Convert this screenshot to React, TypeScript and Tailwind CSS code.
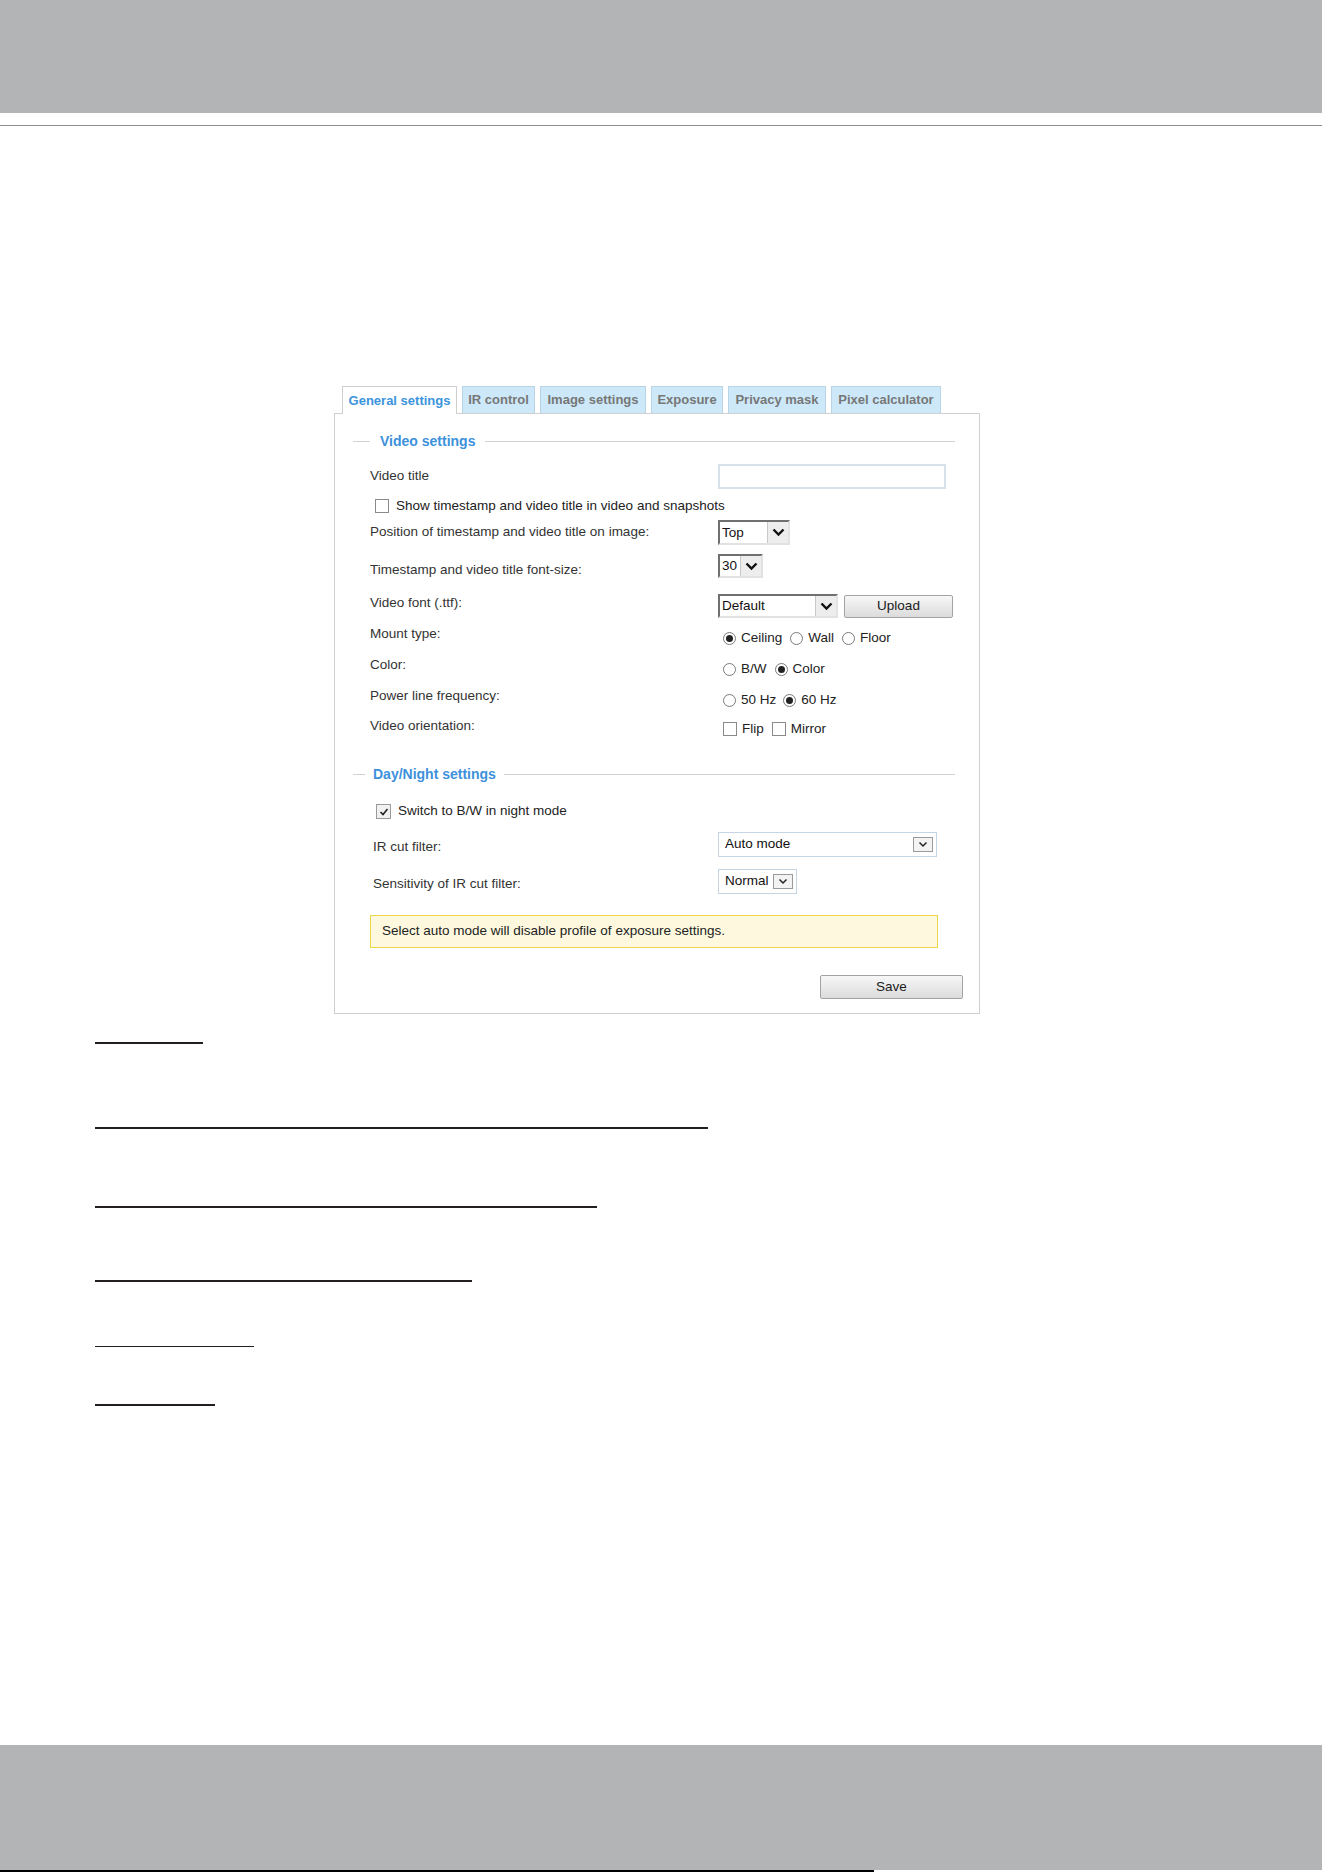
import React from "react";

const TABS = [
  { label: "General settings", w: "w-[115px]", active: true },
  { label: "IR control", w: "w-[73px]" },
  { label: "Image settings", w: "w-[106px]" },
  { label: "Exposure", w: "w-[72px]" },
  { label: "Privacy mask", w: "w-[98px]" },
  { label: "Pixel calculator", w: "w-[110px]" },
];

function Checkbox({ checked = false }: { checked?: boolean }) {
  return (
    <span className="w-[14px] h-[14px] shrink-0 border border-[#8a8a8a] bg-white flex items-center justify-center">
      {checked && (
        <svg width="10" height="10" viewBox="0 0 10 10">
          <polyline points="1.5,5 4,7.5 8.5,2" fill="none" stroke="#222" strokeWidth="1.6" />
        </svg>
      )}
    </span>
  );
}

function Radio({ checked = false }: { checked?: boolean }) {
  return (
    <span className="w-[13px] h-[13px] shrink-0 rounded-full border border-[#7a7a7a] bg-white flex items-center justify-center">
      {checked && <span className="w-[7px] h-[7px] rounded-full bg-[#222]" />}
    </span>
  );
}

function Chevron() {
  return (
    <svg width="13" height="9" viewBox="0 0 13 9">
      <polyline points="1.5,1.5 6.5,6.5 11.5,1.5" fill="none" stroke="#111" strokeWidth="2.4" />
    </svg>
  );
}

// old-style inset select with a grey drop button
function ClassicSelect({ value, w, h = "h-[24px]" }: { value: string; w: string; h?: string }) {
  return (
    <div className={`${w} ${h} flex border-2 border-t-[#707070] border-l-[#707070] border-r-[#e2e2e2] border-b-[#e2e2e2] bg-white`}>
      <span className="flex-1 flex items-center pl-[2px] pt-px text-[13.5px] text-[#111]">{value}</span>
      <span className="w-[21px] flex items-center justify-center bg-[#ededed] border-l border-[#c8c8c8]">
        <Chevron />
      </span>
    </div>
  );
}

// flat select with the small boxed arrow
function FlatSelect({ value, w }: { value: string; w: string }) {
  return (
    <div className={`${w} h-[25px] flex items-center border border-[#c6d5e4] bg-white pl-[6px] pr-[3px]`}>
      <span className="flex-1 text-[13.5px] text-[#111]">{value}</span>
      <span className="w-[20px] h-[15px] flex items-center justify-center border border-[#9a9a9a] bg-[#f3f3f3]">
        <svg width="10" height="7" viewBox="0 0 10 7">
          <polyline points="1.5,1.5 5,5 8.5,1.5" fill="none" stroke="#222" strokeWidth="1.5" />
        </svg>
      </span>
    </div>
  );
}

function Button({ label, w, h }: { label: string; w: string; h: string }) {
  return (
    <button className={`${w} ${h} border border-[#a3a3a3] rounded-[2px] bg-linear-to-b from-[#f7f7f7] to-[#dcdcdc] text-[13.5px] text-[#1a1a1a]`}>
      {label}
    </button>
  );
}

function Choice({ kind, label, checked }: { kind: "radio" | "check"; label: string; checked?: boolean }) {
  return (
    <span className="flex items-center gap-[5px]">
      {kind === "radio" ? <Radio checked={checked} /> : <Checkbox checked={checked} />}
      <span className="text-[13.5px] text-[#222]">{label}</span>
    </span>
  );
}

function Row({ label, h, labelPad = "", children }: { label: string; h: string; labelPad?: string; children: React.ReactNode }) {
  return (
    <div className={`flex items-center ${h}`}>
      <span className={`w-[348px] shrink-0 text-[13.5px] text-[#333] ${labelPad}`}>{label}</span>
      {children}
    </div>
  );
}

export default function App() {
  return (
    <div className="w-[1324px] h-[1872px] bg-white flex flex-col font-['Liberation_Sans',Arial,sans-serif]">
      <div className="w-[1322px] h-[113px] bg-[#b3b4b6]" />
      <div className="w-[1322px] h-px mt-[12px] bg-[#8e8e8e]" />

      {/* tab strip */}
      <div className="ml-[342px] mt-[260px] flex items-end gap-[5px] h-[27px]">
        {TABS.map((t) =>
          t.active ? (
            <div
              key={t.label}
              className={`${t.w} h-[28px] -mb-px relative z-10 bg-white border border-b-0 border-[#cfcfcf] flex items-center justify-center text-[13px] font-bold text-[#3b94dd]`}
            >
              {t.label}
            </div>
          ) : (
            <div
              key={t.label}
              className={`${t.w} h-[27px] bg-[#cde9f9] border border-b-0 border-[#b8d4e5] flex items-center justify-center text-[13px] font-bold text-[#777]`}
            >
              {t.label}
            </div>
          )
        )}
      </div>

      {/* settings panel */}
      <div className="ml-[334px] w-[646px] h-[601px] border border-[#cfcfcf] pt-[17px]">
        <div className="flex items-center h-[20px] pl-[18px] pr-[24px]">
          <span className="w-[17px] h-px bg-[#d2d2d2]" />
          <span className="ml-[10px] text-[14px] font-bold text-[#3d91db]">Video settings</span>
          <span className="ml-[10px] flex-1 h-px bg-[#d2d2d2]" />
        </div>

        <div className="pl-[35px]">
          <Row label="Video title" h="h-[25px] mt-[13px]">
            <div className="w-[228px] h-[25px] border-2 border-[#d6e1ec] bg-white" />
          </Row>
          <div className="flex items-center h-[14px] mt-[10px] pl-[5px] gap-[7px]">
            <Checkbox />
            <span className="text-[13.5px] text-[#222]">Show timestamp and video title in video and snapshots</span>
          </div>
          <Row label="Position of timestamp and video title on image:" h="h-[25px] mt-[7px]">
            <ClassicSelect value="Top" w="w-[72px]" h="h-[25px]" />
          </Row>
          <Row label="Timestamp and video title font-size:" h="h-[24px] mt-[9px]" labelPad="pt-[8px]">
            <ClassicSelect value="30" w="w-[45px]" />
          </Row>
          <Row label="Video font (.ttf):" h="h-[24px] mt-[16px]" labelPad="pb-[6px]">
            <div className="flex items-center gap-[6px]">
              <ClassicSelect value="Default" w="w-[120px]" />
              <Button label="Upload" w="w-[109px]" h="h-[23px]" />
            </div>
          </Row>
          <Row label="Mount type:" h="h-[20px] mt-[10px]" labelPad="pb-[8px]">
            <div className="flex items-center gap-[8px] pl-[5px]">
              <Choice kind="radio" label="Ceiling" checked />
              <Choice kind="radio" label="Wall" />
              <Choice kind="radio" label="Floor" />
            </div>
          </Row>
          <Row label="Color:" h="h-[20px] mt-[11px]" labelPad="pb-[8px]">
            <div className="flex items-center gap-[8px] pl-[5px]">
              <Choice kind="radio" label="B/W" />
              <Choice kind="radio" label="Color" checked />
            </div>
          </Row>
          <Row label="Power line frequency:" h="h-[20px] mt-[11px]" labelPad="pb-[8px]">
            <div className="flex items-center gap-[7px] pl-[5px]">
              <Choice kind="radio" label="50 Hz" />
              <Choice kind="radio" label="60 Hz" checked />
            </div>
          </Row>
          <Row label="Video orientation:" h="h-[20px] mt-[9px]" labelPad="pb-[6px]">
            <div className="flex items-center gap-[8px] pl-[5px]">
              <Choice kind="check" label="Flip" />
              <Choice kind="check" label="Mirror" />
            </div>
          </Row>
        </div>

        <div className="flex items-center h-[20px] mt-[25px] pl-[18px] pr-[24px]">
          <span className="w-[12px] h-px bg-[#d2d2d2]" />
          <span className="ml-[8px] text-[14px] font-bold text-[#3d91db]">Day/Night settings</span>
          <span className="ml-[8px] flex-1 h-px bg-[#d2d2d2]" />
        </div>

        <div className="pl-[38px]">
          <div className="flex items-center h-[15px] mt-[20px] pl-[3px] gap-[7px]">
            <span className="w-[15px] h-[15px] shrink-0 border border-[#9a9a9a] bg-[#f1f1f1] flex items-center justify-center">
              <svg width="10" height="10" viewBox="0 0 10 10">
                <polyline points="1.5,5 4,7.5 8.5,2" fill="none" stroke="#222" strokeWidth="1.6" />
              </svg>
            </span>
            <span className="text-[13.5px] text-[#222]">Switch to B/W in night mode</span>
          </div>
          <div className="flex items-center h-[25px] mt-[13px]">
            <span className="w-[345px] shrink-0 text-[13.5px] text-[#333] pt-[5px]">IR cut filter:</span>
            <FlatSelect value="Auto mode" w="w-[219px]" />
          </div>
          <div className="flex items-center h-[25px] mt-[12px]">
            <span className="w-[345px] shrink-0 text-[13.5px] text-[#333] pt-[5px]">Sensitivity of IR cut filter:</span>
            <FlatSelect value="Normal" w="w-[79px]" />
          </div>
        </div>

        <div className="ml-[35px] mt-[21px] w-[568px] h-[33px] border border-[#efd548] bg-[#fef9de] flex items-center pl-[11px] text-[13.5px] text-[#222]">
          Select auto mode will disable profile of exposure settings.
        </div>

        <div className="ml-[485px] mt-[26px]">
          <Button label="Save" w="w-[143px]" h="h-[24px]" />
        </div>
      </div>

      {/* underlined link stubs */}
      <div className="ml-[95px] flex flex-col">
        <span className="mt-[28px] w-[108px] h-[2px] bg-[#231f20]" />
        <span className="mt-[83px] w-[613px] h-[2px] bg-[#231f20]" />
        <span className="mt-[77px] w-[502px] h-[2px] bg-[#231f20]" />
        <span className="mt-[72px] w-[377px] h-[2px] bg-[#231f20]" />
        <span className="mt-[64px] w-[159px] h-px bg-[#231f20]" />
        <span className="mt-[57px] w-[120px] h-[2px] bg-[#231f20]" />
      </div>

      <div className="mt-auto">
        <div className="w-[1322px] h-[125px] bg-[#b3b4b6]" />
        <div className="w-[874px] h-[2px] bg-black" />
      </div>
    </div>
  );
}
